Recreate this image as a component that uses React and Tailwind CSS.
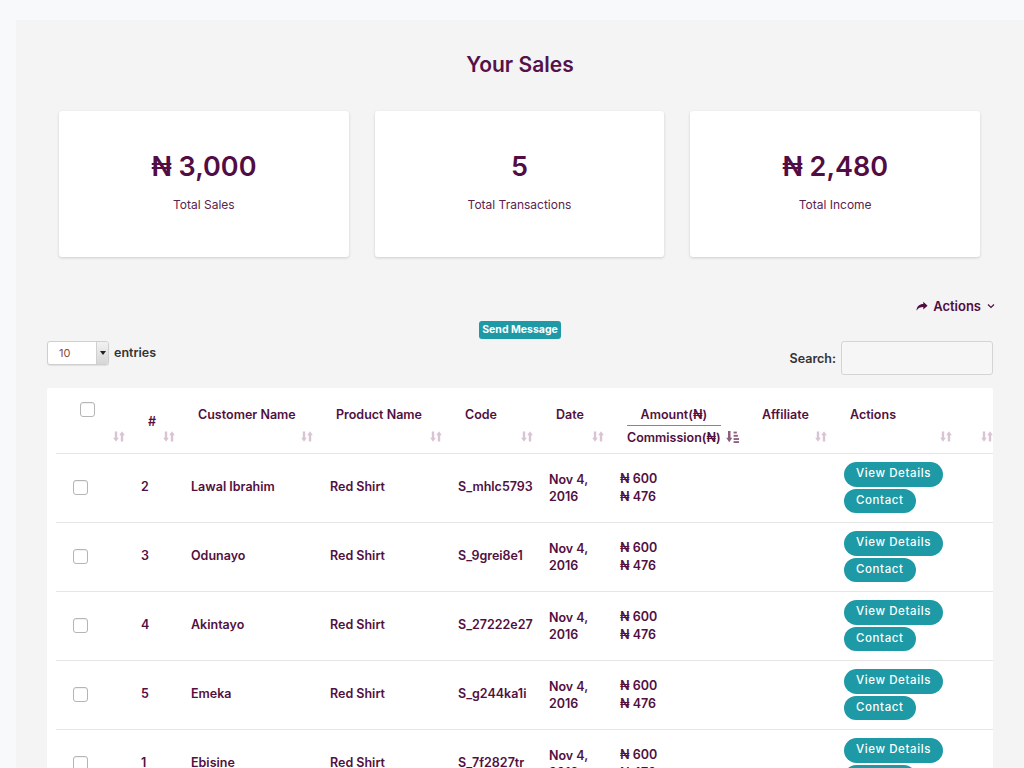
import React from "react";

const F = { fontFamily: '"Inter", "Noto Sans", "DejaVu Sans", sans-serif' };

function SortIcon({ active }) {
  if (active) {
    return (
      <svg width="13" height="13" viewBox="0 0 12 12" className="text-[#8c5f80]">
        <path d="M3 1 V9" stroke="currentColor" strokeWidth="2.3" />
        <path d="M0.2 7.2 L3 11.3 L5.8 7.2 Z" fill="currentColor" />
        <rect x="7" y="1.5" width="3" height="1.7" fill="currentColor" />
        <rect x="7" y="4.5" width="4" height="1.7" fill="currentColor" />
        <rect x="7" y="7.5" width="5" height="1.7" fill="currentColor" />
        <rect x="7" y="10.3" width="5" height="1.7" fill="currentColor" />
      </svg>
    );
  }
  return (
    <svg width="12" height="13" viewBox="0 0 12 12" className="text-[#d8c4d2]">
      <path d="M3 1 V8.5" stroke="currentColor" strokeWidth="2.4" />
      <path d="M0.2 7.2 L3 11.3 L5.8 7.2 Z" fill="currentColor" />
      <path d="M9 3.5 V11" stroke="currentColor" strokeWidth="2.4" />
      <path d="M6.2 4.8 L9 0.7 L11.8 4.8 Z" fill="currentColor" />
    </svg>
  );
}

function Checkbox({ className = "" }) {
  return (
    <div
      className={
        "w-[15px] h-[15px] rounded-[3px] border border-[#b5b5b5] bg-white shadow-[inset_0_1px_1px_rgba(0,0,0,0.06)] " +
        className
      }
    />
  );
}

const rows = [
  { n: "2", name: "Lawal Ibrahim", code: "S_mhlc5793" },
  { n: "3", name: "Odunayo", code: "S_9grei8e1" },
  { n: "4", name: "Akintayo", code: "S_27222e27" },
  { n: "5", name: "Emeka", code: "S_g244ka1i" },
  { n: "1", name: "Ebisine", code: "S_7f2827tr" },
];

const widths = [72, 50, 138, 129, 91, 71, 135, 88, 125, 41];

function Th({ children, sortActive, className = "" }) {
  return (
    <th className={"relative align-top text-left font-semibold pl-[20px] pt-[18px] pb-0 " + className}>
      {children}
      <span className="absolute right-[3px] top-[42px]">
        <SortIcon active={sortActive} />
      </span>
    </th>
  );
}

export default function App() {
  return (
    <div style={F} className="bg-[#f8f9fa] pt-[20px] pl-[16px] min-h-screen text-[#52103f]">
      <div className="bg-[#f4f4f4] min-h-[748px] pb-10">
        <h1 className="text-center text-[21px] font-semibold text-[#56104a] pt-[31px] leading-[28px]">
          Your Sales
        </h1>
        <div className="grid grid-cols-3 gap-[26px] pl-[43px] pr-[44px] mt-[32px]">
          {[
            ["₦ 3,000", "Total Sales"],
            ["5", "Total Transactions"],
            ["₦ 2,480", "Total Income"],
          ].map(([v, l]) => (
            <div
              key={l}
              className="bg-white h-[146px] rounded-[3px] shadow-[0_1px_3px_rgba(0,0,0,0.16)] flex flex-col items-center pt-[39px]"
            >
              <div className="text-[27px] font-semibold leading-[34px] text-[#520d44]">{v}</div>
              <div className="text-[12px] leading-[16px] mt-[13px] text-[#5b2350]">{l}</div>
            </div>
          ))}
        </div>

        <div className="px-[31px]">
          <div className="flex justify-end mt-[40px] mr-[-2px]">
            <div className="flex items-center gap-[5px] text-[13px] font-semibold leading-[18px] text-[#4f0d40]">
              <svg width="12" height="11" viewBox="0 0 14 12">
                <path d="M13.5 5 L8.5 0.5 V3 C4 3 1 5.5 0.5 11 C2.5 7.5 5 6.5 8.5 6.5 V9.5 Z" fill="currentColor" />
              </svg>
              <span>Actions</span>
              <svg width="8" height="6" viewBox="0 0 8 6" className="ml-[1px]">
                <path d="M1 1.5 L4 4.5 L7 1.5" stroke="currentColor" strokeWidth="1.2" fill="none" />
              </svg>
            </div>
          </div>
          <div className="flex justify-center mt-[6px]">
            <button className="h-[18px] px-[3px] rounded-[3px] bg-[#1d9aa6] text-white text-[10.5px] font-bold leading-[18px]">
              Send Message
            </button>
          </div>
          <div className="flex justify-between items-start mt-[2px]">
            <div className="flex items-center">
              <div className="flex h-[24px] w-[62px] border border-[#cfcfcf] rounded-[3px] bg-white shadow-[0_1px_1px_rgba(0,0,0,0.08)] overflow-hidden">
                <div className="flex-1 text-[11px] leading-[22px] pl-[11px] text-[#8a4a3a]">10</div>
                <div className="w-[12px] bg-gradient-to-b from-[#f2f2f2] to-[#d6d6d6] border-l border-[#d0d0d0] flex items-center justify-center">
                  <svg width="6" height="4" viewBox="0 0 6 4">
                    <path d="M0 0 H6 L3 4 Z" fill="#222" />
                  </svg>
                </div>
              </div>
              <span className="ml-[5px] text-[12.5px] font-semibold text-[#333]">entries</span>
            </div>
            <div className="flex items-center">
              <span className="text-[12.5px] font-semibold text-[#333] mt-[2px]">Search:</span>
              <div className="ml-[5px] w-[152px] h-[34px] border border-[#d4d4d4] rounded-[3px] bg-[#f6f6f6]" />
            </div>
          </div>

          <div className="mt-[13px] bg-white overflow-hidden pl-[9px] rounded-[2px]">
            <table className="table-fixed border-collapse w-[940px] text-[12.5px]">
              <colgroup>
                {widths.map((w, i) => (
                  <col key={i} style={{ width: w }} />
                ))}
              </colgroup>
              <thead>
                <tr className="h-[65px] border-b border-[#e6e6e6]">
                  <th className="relative align-top text-left pt-[14px] pl-[24px]">
                    <Checkbox />
                    <span className="absolute right-[3px] top-[42px]">
                      <SortIcon />
                    </span>
                  </th>
                  <Th className="!align-middle !pt-[4px]">#</Th>
                  <Th>Customer Name</Th>
                  <Th>Product Name</Th>
                  <Th>Code</Th>
                  <Th>Date</Th>
                  <Th sortActive>
                    <div className="inline-flex flex-col items-stretch text-center leading-[17px]">
                      <span className="border-b border-[#a07a95] pb-[2px]">Amount(₦)</span>
                      <span className="pt-[3px]">Commission(₦)</span>
                    </div>
                  </Th>
                  <Th>Affiliate</Th>
                  <Th>Actions</Th>
                  <Th></Th>
                </tr>
              </thead>
              <tbody className="font-semibold">
                {rows.map((r) => (
                  <tr key={r.n} className="border-b border-[#e6e6e6]">
                    <td className="pl-[17px] align-middle">
                      <Checkbox />
                    </td>
                    <td className="pl-[13px]">{r.n}</td>
                    <td className="pl-[13px]">{r.name}</td>
                    <td className="pl-[14px]">Red Shirt</td>
                    <td className="pl-[13px]">{r.code}</td>
                    <td className="pl-[13px] leading-[17px]">
                      Nov 4,
                      <br />
                      2016
                    </td>
                    <td className="pl-[13px] leading-[18px]">
                      ₦ 600
                      <br />
                      ₦ 476
                    </td>
                    <td></td>
                    <td className="pl-[14px] pt-[8px] pb-[9px]">
                      <div className="flex flex-col items-start gap-[2px]">
                        <button className="h-[25px] px-[12px] rounded-full bg-[#1d9aa6] text-white text-[11.5px] font-medium tracking-[0.6px] whitespace-nowrap">
                          View Details
                        </button>
                        <button className="h-[24px] px-[12px] rounded-full bg-[#1d9aa6] text-white text-[11.5px] font-medium tracking-[0.6px]">
                          Contact
                        </button>
                      </div>
                    </td>
                    <td></td>
                  </tr>
                ))}
              </tbody>
            </table>
          </div>
        </div>
      </div>
    </div>
  );
}
